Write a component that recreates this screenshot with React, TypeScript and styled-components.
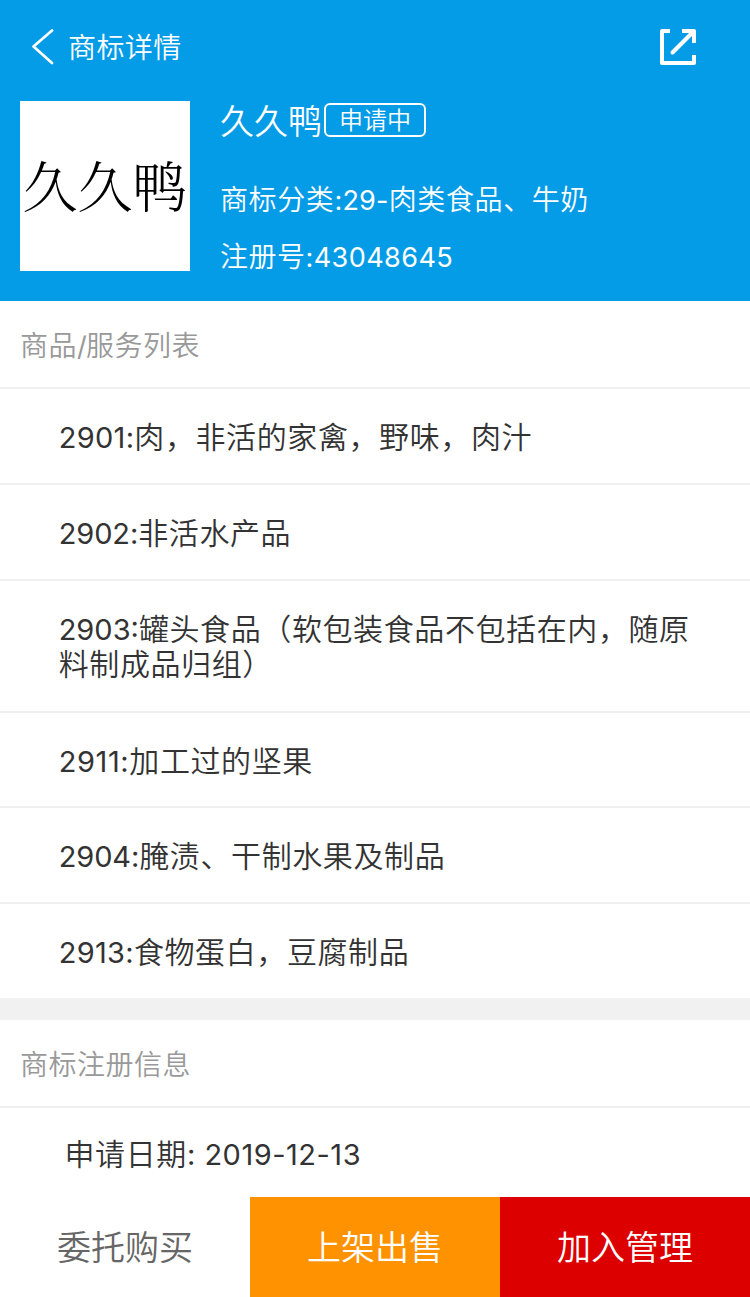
import React from "react";
import styled, { createGlobalStyle } from "styled-components";

const GlobalStyle = createGlobalStyle`
  * { box-sizing: border-box; }
  body { margin: 0; background: #fff; }
`;

const Page = styled.div`
  width: 750px;
  height: 1297px;
  overflow: hidden;
  display: flex;
  flex-direction: column;
  background: #fff;
  color: #333;
  font-family: Inter, "Noto Sans CJK SC", sans-serif;
  font-weight: 350;
`;

const Header = styled.header`
  height: 301px;
  flex: none;
  background: #049be7;
  color: #fff;
`;

const NavBar = styled.div`
  height: 101px;
  padding: 28px 53px 0 31px;
  display: flex;
  justify-content: space-between;
  align-items: flex-start;
`;

const Back = styled.div`
  display: flex;
  align-items: center;
  gap: 13px;
  height: 40px;
`;

const Line = styled.span<{ $size: number; $spacing?: number }>`
  display: block;
  font-size: ${(p) => p.$size}px;
  line-height: 36px;
  letter-spacing: ${(p) => p.$spacing ?? 0}px;
  white-space: nowrap;
`;

const Digits = styled.span<{ $spacing?: number }>`
  font-size: 0.967em;
  font-weight: 400;
  letter-spacing: ${(p) => p.$spacing ?? 0}px;
`;

const Summary = styled.div`
  display: flex;
  padding-left: 20px;
  gap: 30px;
`;

const Mark = styled.div`
  width: 170px;
  height: 170px;
  padding-bottom: 5px;
  background: #fff;
  color: #000;
  display: flex;
  align-items: center;
  justify-content: center;
  font-family: "Noto Serif CJK SC", "Songti SC", SimSun, "Noto Sans CJK SC", serif;
  font-weight: 300;
  font-size: 55px;
  white-space: nowrap;
`;

const Info = styled.div`
  display: flex;
  flex-direction: column;
`;

const NameRow = styled.div`
  display: flex;
  height: 81px;
  padding-top: 2px;
`;

const Name = styled(Line)`
  width: 104px;
  padding-top: 1px;
`;

const Facts = styled.div`
  display: grid;
  gap: 20px;
`;

const Badge = styled.span`
  width: 102px;
  height: 34px;
  border: 2px solid #fff;
  border-radius: 6px;
  font-size: 24px;
  line-height: 32px;
  text-align: center;
`;

const SectionTitle = styled.h2`
  margin: 0;
  height: 86px;
  flex: none;
  padding: 27px 20px 0;
  color: #999;
  font-weight: inherit;
`;

const Row = styled.div<{ $height: number; $left?: number; $top?: number }>`
  flex: none;
  height: ${(p) => p.$height}px;
  padding: ${(p) => p.$top ?? 31}px 50px 0 ${(p) => p.$left ?? 58.7}px;
  border-top: 2px solid #efefef;
  font-size: 30px;
  line-height: 35px;
  letter-spacing: 0.6px;
`;

const Divider = styled.div`
  height: 22px;
  flex: none;
  background: #f1f1f1;
`;

const Actions = styled.footer`
  display: grid;
  grid-template-columns: repeat(3, 250px);
  height: 100px;
  margin-top: auto;
  flex: none;
`;

const Action = styled.button<{ $bg: string; $color: string }>`
  border: 0;
  padding: 0 0 3px;
  background: ${(p) => p.$bg};
  color: ${(p) => p.$color};
  font: inherit;
  font-size: 34px;
`;

const goods = [
  { code: "2901:", text: "肉，非活的家禽，野味，肉汁", height: 96, spacing: 0.3 },
  { code: "2902:", text: "非活水产品", height: 96, spacing: -0.1 },
  { code: "2903:", text: "罐头食品（软包装食品不包括在内，随原料制成品归组）", height: 132, spacing: 0 },
  { code: "2911:", text: "加工过的坚果", height: 95, spacing: 0.6 },
  { code: "2904:", text: "腌渍、干制水果及制品", height: 96, spacing: -0.1 },
  { code: "2913:", text: "食物蛋白，豆腐制品", height: 96, spacing: 0.3 },
];

export default function App() {
  return (
    <Page>
      <GlobalStyle />
      <Header>
        <NavBar>
          <Back>
            <svg width="24" height="38" viewBox="0 0 24 38" fill="none" stroke="#fff" strokeWidth="2.7" strokeLinecap="round" strokeLinejoin="round">
              <path d="M21 1.5 2.5 17.5 21 34" />
            </svg>
            <Line $size={28} $spacing={0.4}>商标详情</Line>
          </Back>
          <svg width="38" height="38" viewBox="0 0 38 38" fill="none" stroke="#fff" strokeWidth="4">
            <path d="M11 3H3V35H35V27M23 3H35V15" strokeLinejoin="round" />
            <path d="M34 4 13.5 24.5" strokeLinecap="round" />
          </svg>
        </NavBar>
        <Summary>
          <Mark>久久鸭</Mark>
          <Info>
            <NameRow>
              <Name $size={34}>久久鸭</Name>
              <Badge>申请中</Badge>
            </NameRow>
            <Facts>
              <Line $size={28} $spacing={0.6}>商标分类<Digits $spacing={0.2}>:29-</Digits>肉类食品、牛奶</Line>
              <Line $size={28} $spacing={0.5}>注册号<Digits $spacing={0.4}>:43048645</Digits></Line>
            </Facts>
          </Info>
        </Summary>
      </Header>
      <SectionTitle><Line $size={28} $spacing={0.5}>商品<Digits $spacing={-0.8}>/</Digits>服务列表</Line></SectionTitle>
      {goods.map((g) => (
        <Row key={g.code} $height={g.height}>
          <Digits $spacing={g.spacing}>{g.code}</Digits>{g.text}
        </Row>
      ))}
      <Divider />
      <SectionTitle><Line $size={28} $spacing={0.5}>商标注册信息</Line></SectionTitle>
      <Row $height={91} $left={64.5} $top={29}>申请日期<Digits $spacing={0.5}>: 2019-12-13</Digits></Row>
      <Actions>
        <Action $bg="#fff" $color="#666">委托购买</Action>
        <Action $bg="#ff9200" $color="#fff">上架出售</Action>
        <Action $bg="#dd0000" $color="#fff">加入管理</Action>
      </Actions>
    </Page>
  );
}
